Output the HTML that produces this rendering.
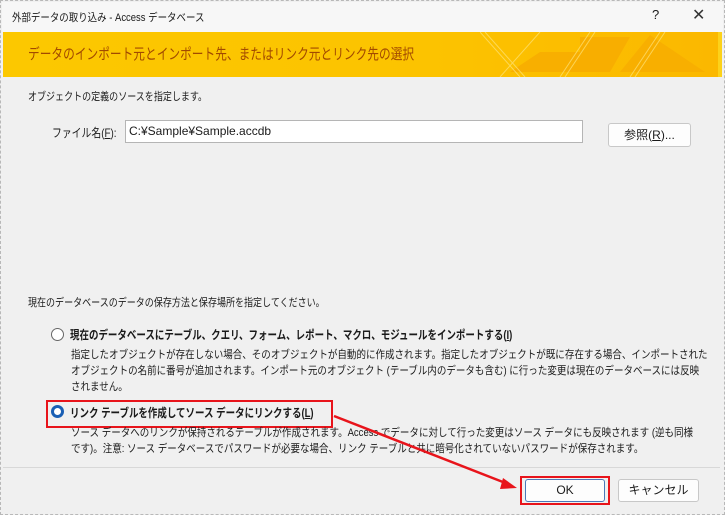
<!DOCTYPE html>
<html><head><meta charset="utf-8"><style>
body{margin:0;width:725px;height:515px;overflow:hidden;background:#f0f0f0;font-family:"Liberation Sans","Noto Sans CJK JP",sans-serif;color:#1a1a1a;position:relative}
.a{position:absolute;white-space:nowrap}
.s{transform-origin:0 0;transform:scaleX(.82)}
</style></head><body>
<div class="a" style="left:0;top:0;width:723px;height:513px;border:1px dashed #b8b8b8"></div>
<div class="a" style="left:2px;top:2px;width:721px;height:30px;background:#f7f7f7"></div>
<div class="a" style="left:12px;top:9px;font-size:11px;transform-origin:0 0;transform:scaleX(.86)">外部データの取り込み - Access データベース</div>
<div class="a" style="left:652px;top:7px;font-size:13px">?</div>
<div class="a" style="left:692px;top:5px;font-size:16px;color:#333">✕</div>
<div class="a" style="left:3px;top:32px;width:715px;height:45px;background:linear-gradient(90deg,#fcc800,#fcc300 60%,#fbb800)"></div>
<svg class="a" style="left:480px;top:32px" width="238" height="45">
<polygon points="30,40 60,20 100,20 100,5 150,5 130,40" fill="#f6a800" opacity=".7"/>
<polygon points="140,40 170,3 225,40" fill="#f7ac00" opacity=".8"/>
<g stroke="#fde27a" stroke-width="1" fill="none" opacity=".7"><path d="M0,0 L40,45 M5,0 L45,45 M60,0 L20,45 M110,0 L80,45 M115,0 L85,45 M180,0 L150,45 M185,0 L155,45"/></g>
</svg>
<div class="a" style="left:718px;top:32px;width:4px;height:45px;background:#fcd21a"></div>
<div class="a" style="left:28px;top:43px;font-size:15px;color:#a24a00;transform-origin:0 0;transform:scaleX(.78)">データのインポート元とインポート先、またはリンク元とリンク先の選択</div>
<div class="a s" style="left:28px;top:88px;font-size:11px">オブジェクトの定義のソースを指定します。</div>
<div class="a s" style="left:52px;top:124px;font-size:12px">ファイル名(<u>F</u>):</div>
<div class="a" style="left:125px;top:120px;width:456px;height:21px;background:#fff;border:1px solid #b5b5b5;font-size:12px;line-height:21px;text-indent:3px">C:¥Sample¥Sample.accdb</div>
<div class="a" style="left:608px;top:123px;width:81px;height:22px;background:#fdfdfd;border:1px solid #c8c8c8;border-radius:3px;font-size:12px;text-align:center;line-height:22px">参照(<u>R</u>)...</div>
<div class="a s" style="left:28px;top:294px;font-size:11px">現在のデータベースのデータの保存方法と保存場所を指定してください。</div>
<div class="a" style="left:51px;top:328px;width:11px;height:11px;border:1px solid #666;border-radius:50%;background:#fff"></div>
<div class="a" style="left:70px;top:326px;font-size:12px;font-weight:bold;transform-origin:0 0;transform:scaleX(.79)">現在のデータベースにテーブル、クエリ、フォーム、レポート、マクロ、モジュールをインポートする(<u>I</u>)</div>
<div class="a" style="left:71px;top:347px;font-size:11px;line-height:16px;transform-origin:0 0;transform:scaleX(.865)">指定したオブジェクトが存在しない場合、そのオブジェクトが自動的に作成されます。指定したオブジェクトが既に存在する場合、インポートされた<br>オブジェクトの名前に番号が追加されます。インポート元のオブジェクト (テーブル内のデータも含む) に行った変更は現在のデータベースには反映<br>されません。</div>
<div class="a" style="left:46px;top:400px;width:283px;height:24px;border:2px solid #e8141b"></div>
<div class="a" style="left:51px;top:405px;width:7px;height:7px;border:3px solid #1a5fb4;border-radius:50%;background:#fff"></div>
<div class="a" style="left:70px;top:404px;font-size:12px;font-weight:bold;transform-origin:0 0;transform:scaleX(.79)">リンク テーブルを作成してソース データにリンクする(<u>L</u>)</div>
<div class="a" style="left:71px;top:425px;font-size:11px;line-height:16px;transform-origin:0 0;transform:scaleX(.865)">ソース データへのリンクが保持されるテーブルが作成されます。Access でデータに対して行った変更はソース データにも反映されます (逆も同様<br>です)。注意: ソース データベースでパスワードが必要な場合、リンク テーブルと共に暗号化されていないパスワードが保存されます。</div>
<div class="a" style="left:3px;top:467px;width:717px;height:1px;background:#d8d8d8"></div>
<div class="a" style="left:520px;top:476px;width:86px;height:25px;border:2px solid #e8141b"></div>
<div class="a" style="left:525px;top:479px;width:78px;height:21px;background:#fdfdfd;border:1px solid #4a78b8;border-radius:3px;font-size:12px;text-align:center;line-height:21px">OK</div>
<div class="a" style="left:618px;top:479px;width:79px;height:21px;background:#fdfdfd;border:1px solid #c8c8c8;border-radius:3px;font-size:12px;text-align:center;line-height:21px">キャンセル</div>
<svg class="a" style="left:0;top:0" width="725" height="515"><line x1="334" y1="416" x2="508" y2="484" stroke="#e8141b" stroke-width="2.5"/><polygon points="517,488 503,478 500,489" fill="#e8141b"/></svg>
</body></html>
